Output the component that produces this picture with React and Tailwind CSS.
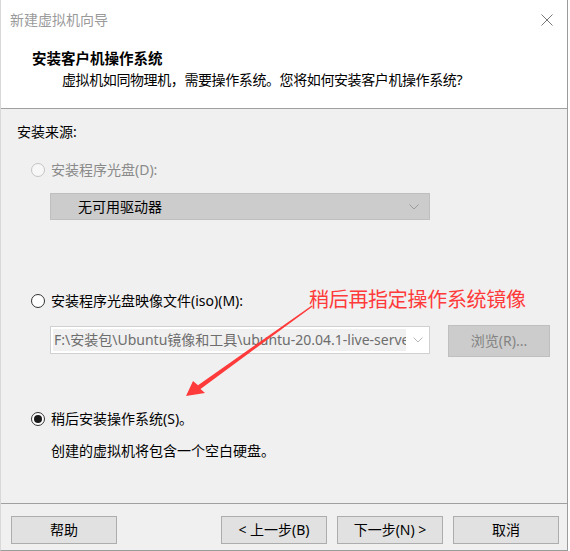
import React from "react";

function Radio({ state }) {
  if (state === "disabled")
    return <span className="w-[14px] h-[14px] rounded-full border border-[#c4c4c4] bg-[#f7f7f7] shrink-0" />;
  if (state === "checked")
    return (
      <span className="w-[14px] h-[14px] rounded-full border border-[#333] bg-white shrink-0 flex items-center justify-center">
        <span className="w-[8px] h-[8px] rounded-full bg-[#1a1a1a]" />
      </span>
    );
  return <span className="w-[14px] h-[14px] rounded-full border border-[#333] bg-white shrink-0" />;
}

function Chevron({ color }) {
  return (
    <svg width="10" height="6" viewBox="0 0 10 6">
      <polyline points="0.5,0.5 5,5 9.5,0.5" fill="none" stroke={color} strokeWidth="1" />
    </svg>
  );
}

function Btn({ children }) {
  return (
    <div className="w-[106px] h-[28px] border border-[#adadad] bg-[#e1e1e1] flex items-center justify-center text-[14px] leading-[20px] text-black">
      {children}
    </div>
  );
}

export default function App() {
  return (
    <div
      className="relative w-[570px] h-[551px] bg-white overflow-hidden"
      style={{ fontFamily: '"Noto Sans", "Noto Sans CJK SC", sans-serif' }}
    >
      <div className="w-[568px] h-[551px] flex flex-col border-r border-b border-l border-[#9c9c9c] border-l-[#d8d8d8]">
        {/* header */}
        <div className="h-[109px] bg-white border-b border-[#a0a0a0] flex flex-col shrink-0">
          <div className="h-[40px] flex items-center justify-between pl-[9px] pr-[14px]">
            <span className="text-[14px] leading-[20px] text-[#9a9a9a]">新建虚拟机向导</span>
            <svg width="12" height="12" viewBox="0 0 12 12">
              <path d="M0.5 0.5 L11.5 11.5 M11.5 0.5 L0.5 11.5" stroke="#777" strokeWidth="1" />
            </svg>
          </div>
          <div className="mt-[8px] pl-[31px] text-[14.5px] leading-[20px] font-bold text-black">安装客户机操作系统</div>
          <div className="mt-[2px] pl-[61px] text-[14px] leading-[20px] text-black tracking-[-0.4px] whitespace-nowrap">
            虚拟机如同物理机，需要操作系统。您将如何安装客户机操作系统?
          </div>
        </div>

        {/* body */}
        <div className="flex-1 bg-[#f0f0f0] border-b border-[#a0a0a0] flex flex-col text-[14px] leading-[20px]">
          <div className="mt-[13px] pl-[16px] text-black">安装来源:</div>

          <div className="mt-[18px] pl-[30px] flex items-center gap-[6px] text-[#8a8a8a]">
            <Radio state="disabled" />
            <span>安装程序光盘(D):</span>
          </div>

          <div className="mt-[13px] ml-[49px] w-[380px] h-[27px] bg-[#cccccc] border border-[#bfbfbf] flex items-center justify-between pl-[27px] pr-[10px]">
            <span className="text-black">无可用驱动器</span>
            <Chevron color="#9a9a9a" />
          </div>

          <div className="mt-[71px] pl-[30px] flex items-center gap-[6px] text-black">
            <Radio state="off" />
            <span>安装程序光盘映像文件(iso)(M):</span>
          </div>

          <div className="mt-[14px] ml-[49px] flex items-start gap-[18px]">
            <div className="mt-[1px] w-[380px] h-[28px] bg-white border border-[#d0d0d0] flex items-center">
              <div className="ml-[2px] w-[353px] h-[22px] bg-[#f0f0f0] overflow-hidden whitespace-nowrap text-[#6d6d6d] pl-[1px] leading-[22px]">
                F:\安装包\Ubuntu镜像和工具\ubuntu-20.04.1-live-server-amd64.iso
              </div>
              <div className="flex-1 flex justify-center">
                <Chevron color="#b8b8b8" />
              </div>
            </div>
            <div className="w-[102px] h-[32px] bg-[#cccccc] border border-[#bfbfbf] flex items-center justify-center text-[#838383]">
              浏览(R)...
            </div>
          </div>

          <div className="mt-[52px] pl-[30px] flex items-center gap-[6px] text-black">
            <Radio state="checked" />
            <span>稍后安装操作系统(S)。</span>
          </div>

          <div className="mt-[12px] pl-[50px] text-black">创建的虚拟机将包含一个空白硬盘。</div>
        </div>

        {/* footer */}
        <div className="h-[46px] bg-[#f0f0f0] flex items-start pt-[12px] pl-[10px] shrink-0">
          <Btn>帮助</Btn>
          <div className="ml-[104px]">
            <Btn>&lt; 上一步(B)</Btn>
          </div>
          <div className="ml-[10px]">
            <Btn>下一步(N) &gt;</Btn>
          </div>
          <div className="ml-[10px]">
            <Btn>取消</Btn>
          </div>
        </div>
      </div>

      {/* annotation overlay */}
      <div
        className="absolute left-[309px] top-[286px] text-[20px] leading-[26px] text-[#ff3a3a] tracking-[-0.3px] whitespace-nowrap"
        style={{ fontFamily: '"Noto Sans CJK SC", sans-serif' }}
      >
        稍后再指定操作系统镜像
      </div>
      <svg className="absolute left-0 top-0 pointer-events-none" width="570" height="551" viewBox="0 0 570 551">
        <polygon
          points="312.6,306.4 200.5,389 205,393 186,396 193,381 198,385.2 311.8,305.4"
          fill="#ff3a3a"
        />
      </svg>
    </div>
  );
}
